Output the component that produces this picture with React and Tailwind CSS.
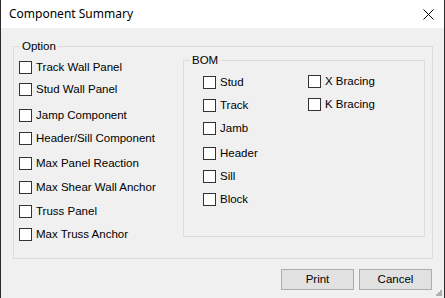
import { useState } from "react";

const options = [
  { label: "Track Wall Panel", mt: "mt-0" },
  { label: "Stud Wall Panel", mt: "mt-[9px]" },
  { label: "Jamp Component", mt: "mt-[13px]" },
  { label: "Header/Sill Component", mt: "mt-[10px]" },
  { label: "Max Panel Reaction", mt: "mt-[12px]" },
  { label: "Max Shear Wall Anchor", mt: "mt-[11px]" },
  { label: "Truss Panel", mt: "mt-[11px]" },
  { label: "Max Truss Anchor", mt: "mt-[10px]" },
];

const bomLeft = [
  { label: "Stud", mt: "mt-0" },
  { label: "Track", mt: "mt-[10px]" },
  { label: "Jamb", mt: "mt-[10px]" },
  { label: "Header", mt: "mt-[12px]" },
  { label: "Sill", mt: "mt-[10px]" },
  { label: "Block", mt: "mt-[10px]" },
];

const bomRight = [
  { label: "X Bracing", mt: "mt-0" },
  { label: "K Bracing", mt: "mt-[10px]" },
];

function Check({ label, mt }) {
  const [on, setOn] = useState(false);
  return (
    <label className={`flex h-[13px] items-center gap-[4px] ${mt} cursor-default`}>
      <span
        onClick={() => setOn(!on)}
        className="flex h-[13px] w-[13px] shrink-0 items-center justify-center border border-[#333333] bg-white"
      >
        {on && (
          <svg width="9" height="9" viewBox="0 0 9 9">
            <path d="M1 4.5 L3.5 7 L8 1.5" fill="none" stroke="#000" strokeWidth="1.4" />
          </svg>
        )}
      </span>
      <span className="whitespace-nowrap leading-none">{label}</span>
    </label>
  );
}

function Group({ title, className, children }) {
  return (
    <div className={`relative border border-[#dcdcdc] ${className}`}>
      <span className="absolute left-[6px] top-[-8px] bg-[#f0f0f0] px-[2px] leading-[14px]">{title}</span>
      {children}
    </div>
  );
}

export default function App() {
  return (
    <div
      className="flex h-[298px] w-[445px] flex-col border-x border-[#2b2b2b] bg-[#f0f0f0] text-[11.5px] text-black"
      style={{ fontFamily: '"Liberation Sans", Arial, sans-serif' }}
    >
      <div className="flex h-[28px] shrink-0 items-center justify-between bg-white pl-[8px] pr-[10px]">
        <span className="text-[12px]" style={{ fontFamily: '"Noto Sans", sans-serif' }}>
          Component Summary
        </span>
        <svg width="11" height="11" viewBox="0 0 11 11">
          <path d="M0.5 0.5 L10.5 10.5 M10.5 0.5 L0.5 10.5" stroke="#000" strokeWidth="1" />
        </svg>
      </div>

      <Group title="Option" className="ml-[12px] mt-[18px] flex h-[213px] w-[420px]">
        <div className="w-[169px] shrink-0 pl-[5px] pt-[14px]">
          {options.map((o) => (
            <Check key={o.label} {...o} />
          ))}
        </div>
        <Group title="BOM" className="mt-[13px] flex h-[177px] w-[242px]">
          <div className="w-[124px] shrink-0 pl-[19px] pt-[15px]">
            {bomLeft.map((o) => (
              <Check key={o.label} {...o} />
            ))}
          </div>
          <div className="pt-[14px]">
            {bomRight.map((o) => (
              <Check key={o.label} {...o} />
            ))}
          </div>
        </Group>
      </Group>

      <div className="relative mt-[10px] flex justify-end gap-[5px] pr-[12px]">
        <button className="h-[21px] w-[73px] border border-[#adadad] bg-[#e1e1e1] text-[11.5px]">Print</button>
        <button className="h-[21px] w-[73px] border border-[#adadad] bg-[#e1e1e1] text-[11.5px]">Cancel</button>
        <svg className="absolute bottom-[-6px] right-[2px]" width="6" height="6" viewBox="0 0 6 6">
          <rect x="4" y="0" width="2" height="2" fill="#b0b0b0" />
          <rect x="2" y="2" width="2" height="2" fill="#b0b0b0" />
          <rect x="4" y="2" width="2" height="2" fill="#b0b0b0" />
          <rect x="0" y="4" width="2" height="2" fill="#b0b0b0" />
          <rect x="2" y="4" width="2" height="2" fill="#b0b0b0" />
          <rect x="4" y="4" width="2" height="2" fill="#b0b0b0" />
        </svg>
      </div>
    </div>
  );
}
